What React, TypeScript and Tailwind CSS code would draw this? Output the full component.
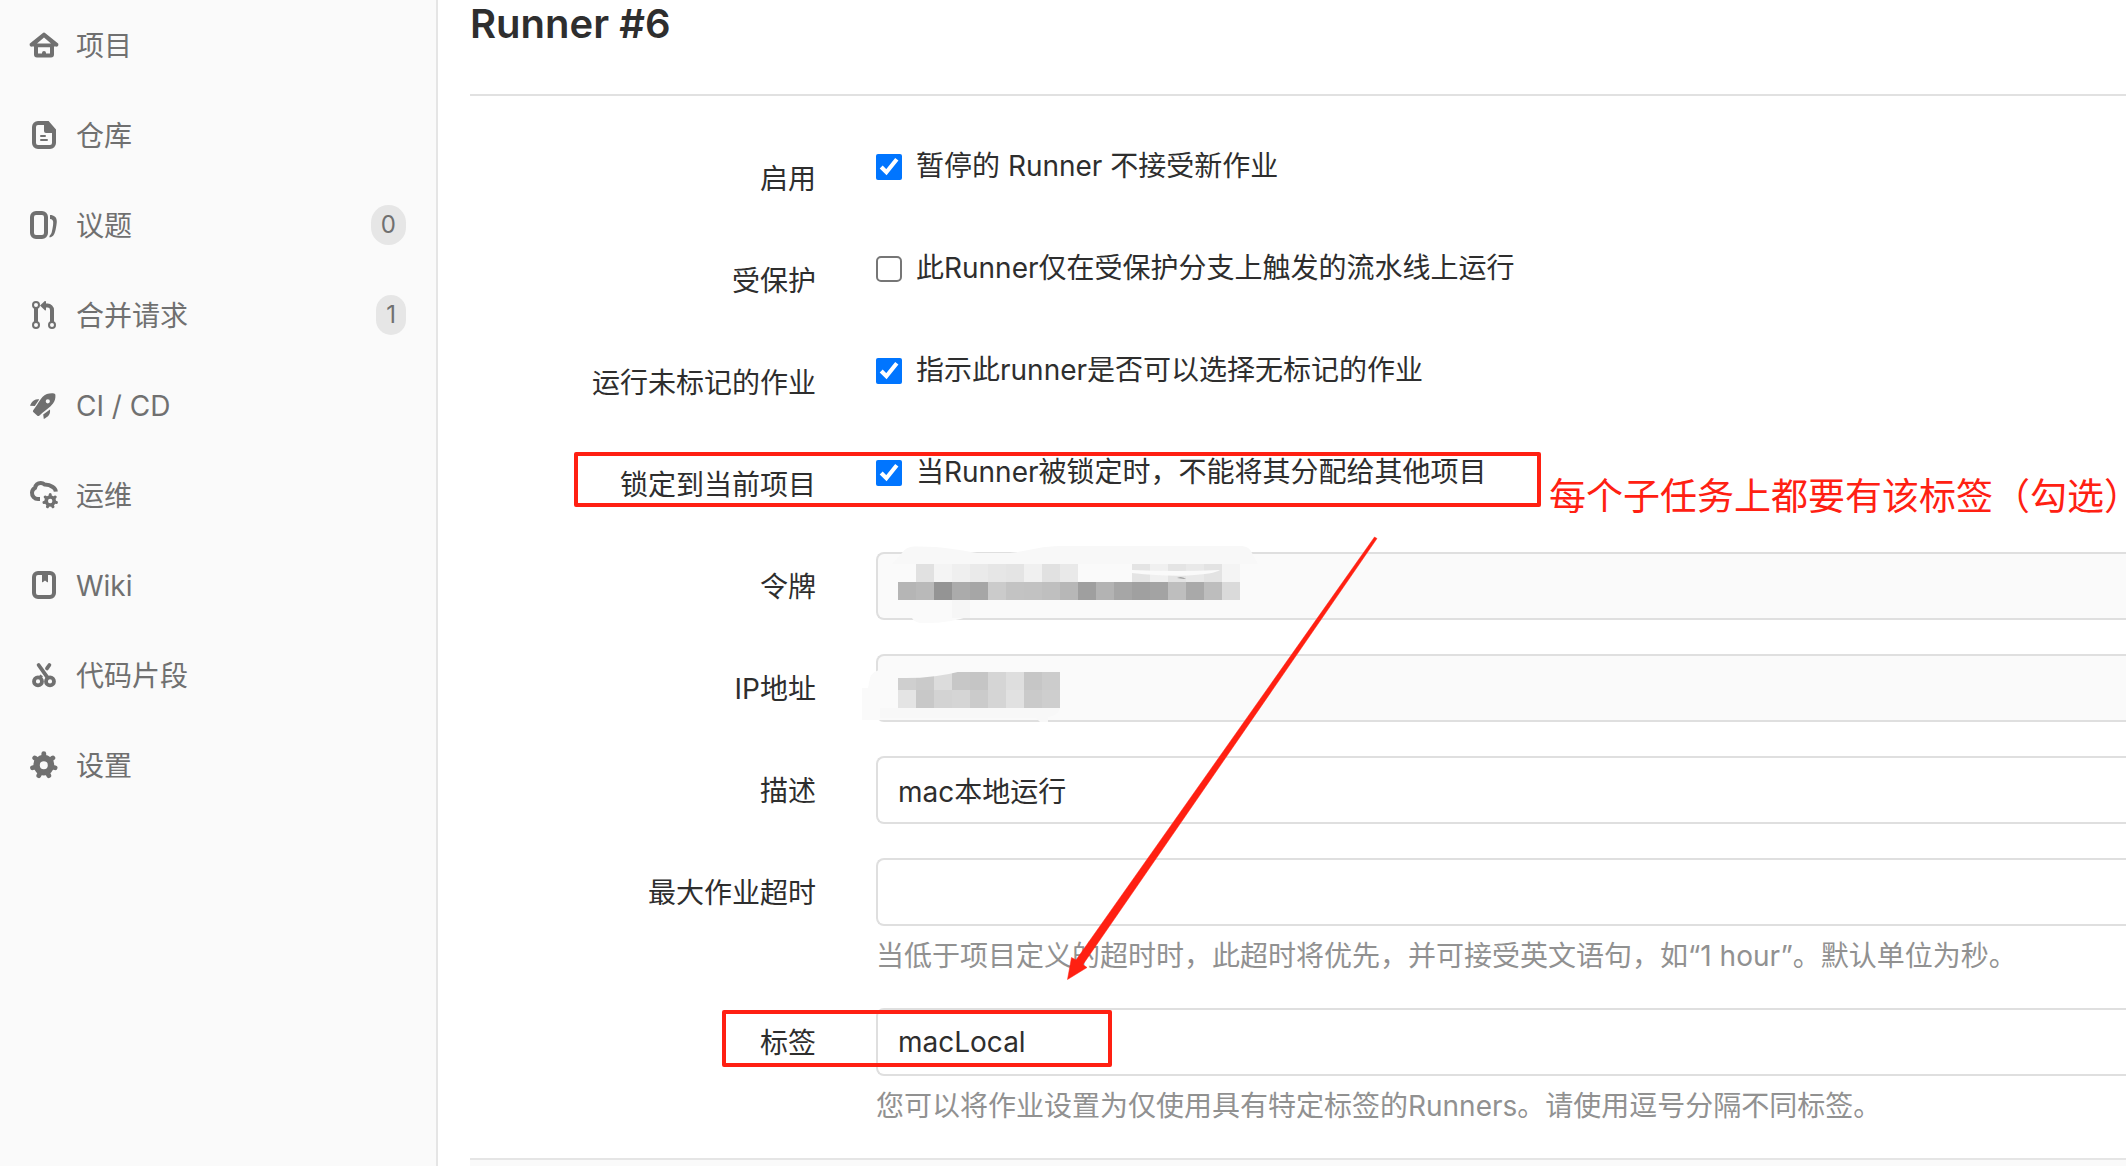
import React from "react";

type IconProps = { children: React.ReactNode };
const Icon = ({ children }: IconProps) => (
  <svg viewBox="0 0 16 16" className="size-8 shrink-0" fill="none" stroke="none" aria-hidden="true">
    {children}
  </svg>
);

const gearTeeth = (cx: number, cy: number, count: number, from: number, to: number) =>
  Array.from({ length: count }, (_, i) => {
    const a = -Math.PI / 2 + (i * 2 * Math.PI) / count;
    return `M${cx + from * Math.cos(a)} ${cy + from * Math.sin(a)}L${cx + to * Math.cos(a)} ${cy + to * Math.sin(a)}`;
  }).join("");

const HomeIcon = () => (
  <Icon>
    <path
      fill="currentColor"
      fillRule="evenodd"
      d="M7.3 2.1a1.1 1.1 0 0 1 1.4 0l5.9 4.8A1 1 0 0 1 14 8.8h-1v3.9a1.5 1.5 0 0 1-1.5 1.5h-7A1.5 1.5 0 0 1 3 12.700V8.800H2a1 1 0 0 1-.6-1.900zM8 4.200 4.500 7.200h7zM5 9.100v3.200h2V12a1 1 0 0 1 2 0v.3h2V9.100z"
    />
  </Icon>
);
const DocIcon = () => (
  <Icon>
    <path
      fill="currentColor"
      fillRule="evenodd"
      d="M5 1h5.300L14 5.200V12a3 3 0 0 1-3 3H5a3 3 0 0 1-3-3V4a3 3 0 0 1 3-3zm0 2a1 1 0 0 0-1 1v8a1 1 0 0 0 1 1h6a1 1 0 0 0 1-1V7H9a1 1 0 0 1-1-1V3z"
    />
    <path stroke="currentColor" strokeLinecap="round" d="M6.500 8.500h2M6.500 10.500h3" />
  </Icon>
);
const IssuesIcon = () => (
  <Icon>
    <rect x="2" y="2" width="7" height="12" rx="2" stroke="currentColor" strokeWidth="2" />
    <path
      fill="currentColor"
      d="M11 3c2 0 3.500 1 3.400 3.500-.2 2-.5 3.800-.9 5-.4 1.500-1.200 2.500-2.600 2.700-.3-.3-.2-.7 0-1 .7-.5.9-1.200 1.100-2.200.4-1.800.6-3 .6-4.500 0-.8-.5-1.400-1.600-1.500z"
    />
  </Icon>
);
const MergeIcon = () => (
  <Icon>
    <g stroke="currentColor">
      <circle cx="4" cy="3" r="1.500" />
      <circle cx="4" cy="13" r="1.500" />
      <circle cx="12" cy="13" r="1.500" />
      <path strokeWidth="2" d="M4 4.500v7M12 11.500V5.500a2.200 2.200 0 0 0-2.200-2.200H8.500" />
    </g>
    <path fill="currentColor" d="M6 3.200 8.400 1q.6-.2.6.4v3.800q0 .7-.6.4z" />
  </Icon>
);
const RocketIcon = () => (
  <Icon>
    <path
      fill="currentColor"
      fillRule="evenodd"
      d="M13 2.200q.7 0 .7.800c.1 1.600-.2 3-1.200 4.200-1.500 2-3.500 3-5.400 4.800l-1.500 1.400q-.5.300-.9 0l-2.100-1.900q-.3-.4 0-.9l1-1.400C5 7.500 5.800 5.500 7.200 4 8.800 2.400 10.800 2 13 2.200zM9.900 5.100a1 1 0 1 0 0 2.100 1 1 0 0 0 0-2.100z"
    />
    <path
      fill="currentColor"
      d="M1 8.400c.4-1.200 1-2.100 1.900-2.700.8-.5 1.700-.6 2.700-.5L3.400 8.500zM11 10.300c.1 1.200 0 2.100-.6 2.800-.7.800-1.500 1.400-2.500 1.900l-.3-2.300z"
    />
  </Icon>
);
const CloudGearIcon = () => (
  <Icon>
    <path
      stroke="currentColor"
      strokeWidth="2"
      d="M6 10H5a3 3 0 0 1-3-3.200A2.700 2.700 0 0 1 3.500 4.500C3.800 3 5 2 6.400 2c1 0 1.500.4 2 .8 1.800 0 3 .5 4 1.200.8.500 1.400 1.200 1.500 2.300"
    />
    <circle cx="11.100" cy="11" r="2" stroke="currentColor" strokeWidth="1.800" />
    <path stroke="currentColor" strokeWidth="1.500" strokeLinecap="round" d={gearTeeth(11.1, 11, 7, 2.4, 3.2)} />
  </Icon>
);
const WikiIcon = () => (
  <Icon>
    <rect x="3" y="2" width="10" height="12" rx="2" stroke="currentColor" strokeWidth="2" />
    <path fill="currentColor" d="M7 2.500h3v4q-.2.300-.5 0l-1-.8-1 .8q-.3.300-.5 0z" />
  </Icon>
);
const ScissorsIcon = () => (
  <Icon>
    <g stroke="currentColor" strokeWidth="1.900" strokeLinecap="round">
      <circle cx="5" cy="11.200" r="2" />
      <circle cx="11" cy="11.200" r="2" />
      <path d="M5.300 3l4.500 6.300M10.700 3 9.500 4.700" />
    </g>
    <path stroke="currentColor" strokeWidth="1.600" d="M6.800 8.200 6 9.300" />
  </Icon>
);
const GearIcon = () => (
  <Icon>
    <circle cx="7.900" cy="8.100" r="3.600" stroke="currentColor" strokeWidth="3.200" />
    <path stroke="currentColor" strokeWidth="2.400" strokeLinecap="round" d={gearTeeth(7.9, 8.1, 7, 4, 5.8)} />
  </Icon>
);

const NAV: { label: string; icon: () => React.ReactElement; count?: number }[] = [
  { label: "项目", icon: HomeIcon },
  { label: "仓库", icon: DocIcon },
  { label: "议题", icon: IssuesIcon, count: 0 },
  { label: "合并请求", icon: MergeIcon, count: 1 },
  { label: "CI / CD", icon: RocketIcon },
  { label: "运维", icon: CloudGearIcon },
  { label: "Wiki", icon: WikiIcon },
  { label: "代码片段", icon: ScissorsIcon },
  { label: "设置", icon: GearIcon },
];

const Row = ({ id, label, children }: { id: string; label: string; children: React.ReactNode }) => (
  <div className="grid grid-cols-[346px_1fr] gap-x-[60px]">
    <label htmlFor={id} className="flex h-[68px] items-center justify-end pt-[2px] whitespace-nowrap">
      {label}
    </label>
    <div className="relative min-w-0">{children}</div>
  </div>
);

const CheckRow = ({ id, label, text, checked }: { id: string; label: string; text: string; checked?: boolean }) => (
  <Row id={id} label={label}>
    <div className="flex items-start gap-[14px]">
      <input
        id={id}
        type="checkbox"
        defaultChecked={checked}
        className="mt-[10px] size-[26px] shrink-0 appearance-none rounded-[5px] border-2 border-[#767676] checked:appearance-auto"
      />
      <label htmlFor={id} className="pt-px whitespace-nowrap">
        {text}
      </label>
    </div>
  </Row>
);

const FIELD =
  "block h-[68px] w-full rounded-l-lg border-2 border-r-0 border-[#dfdfdf] px-5 outline-none";
const HINT = "-mb-[3px] pt-[9px] whitespace-nowrap text-[#919191]";

const TOKEN_TOP = [
  "", "#e1e1e1", "#f4f4f4", "#efefef", "#eaeaea", "#e6e6e6", "#e4e4e4", "#f0f0f0", "#e1e1e1", "#e9e9e9",
  "", "", "", "#e4e4e4", "#f0f0f0", "#e4e4e4", "#e9e9e9", "#e3e3e3", "#f4f4f4",
];
const TOKEN_BOTTOM = [
  "#b5b5b5", "#b9b9b9", "#949494", "#ababab", "#a6a6a6", "#cbcbcb", "#c3c3c3", "#c2c2c2", "#bfbfbf", "#b7b7b7",
  "#9f9f9f", "#b3b3b3", "#a6a6a6", "#a0a0a0", "#a3a3a3", "#bebebe", "#a9a9a9", "#bdbdbd", "#dadada",
];
const IP_TOP = ["#cfcfcf", "#cacaca", "#dcdcdc", "#c7c7c7", "#c5c5c5", "#d5d5d5", "#dedede", "#c6c6c6", "#cccccc"];
const IP_BOTTOM = ["#e4e4e4", "#c8c8c8", "#d3d3d3", "#d5d5d5", "#cbcbcb", "#d5d5d5", "#e1e1e1", "#cacaca", "#cecece"];

const Blocks = ({ y, colors }: { y: number; colors: string[] }) => (
  <>
    {colors.map((c, i) => (c ? <rect key={i} x={38 + i * 18} y={y} width="18" height="18" fill={c} /> : null))}
  </>
);

export default function App() {
  return (
    <div className="flex min-h-screen overflow-hidden bg-white font-[Inter,'Noto_Sans_CJK_SC',sans-serif] text-[28px] leading-[42px] text-[#2e2e2e]">
      <nav className="w-[438px] shrink-0 border-r-2 border-[#e5e5e5] bg-[#fafafa] text-[#707070]">
        <ul>
          {NAV.map(({ label, icon: Glyph, count }) => (
            <li key={label}>
              <a href="#" className="flex h-[90px] items-center gap-4 pr-[30px] pl-7">
                <Glyph />
                <span className="grow pt-[2px]">{label}</span>
                {count !== undefined && (
                  <span className="flex h-10 items-center rounded-full bg-[#e6e6e6] px-[10px] text-2xl">{count}</span>
                )}
              </a>
            </li>
          ))}
        </ul>
      </nav>

      <main className="min-w-0 grow pl-8">
        <h1 className="h-[94px] text-[40px] leading-[48px] font-semibold">Runner #6</h1>
        <hr className="border-t-2 border-[#e1e1e1]" />

        <form className="relative mt-12 flex flex-col gap-[34px]">
          <CheckRow id="active" label="启用" text="暂停的 Runner 不接受新作业" checked />
          <CheckRow id="protected" label="受保护" text="此Runner仅在受保护分支上触发的流水线上运行" />
          <CheckRow id="untagged" label="运行未标记的作业" text="指示此runner是否可以选择无标记的作业" checked />
          <CheckRow id="locked" label="锁定到当前项目" text="当Runner被锁定时，不能将其分配给其他项目" checked />

          <Row id="token" label="令牌">
            <input id="token" type="text" readOnly className={`${FIELD} bg-[#fafafa]`} />
            <svg className="pointer-events-none absolute -top-4 -left-4 h-[100px] w-[420px]" aria-hidden="true">
              <path fill="#f8f8f8" d="M32 28 42 17Q46 10.500 54 10.500C80 10 100 14 117 17h33c18-2 32-7 50-7h182q8 1 10 7l6 11z" />
              <path fill="#fafafa" d="M52 76h58v4q-22 8-50 7-6-1-8-5z" />
              <path fill="#f6f6f6" d="M92 64h18v18H92z" />
              <Blocks y={28} colors={TOKEN_TOP} />
              <Blocks y={46} colors={TOKEN_BOTTOM} />
              <path fill="#fafafa" d="M272 34q44 2 88 0-6 4-32 5.500-24 1-56-2.500z" />
              <path fill="#909090" d="M317 42q5-2 9 1z" />
            </svg>
          </Row>

          <Row id="ip" label="IP地址">
            <input id="ip" type="text" readOnly className={`${FIELD} bg-[#fafafa]`} />
            <svg className="pointer-events-none absolute -top-4 -left-4 h-[100px] w-[220px]" aria-hidden="true">
              <path fill="#fafafa" d="M2 82V50h6l2-10q3-8 12-8h18v50z" />
              <path fill="#f8f8f8" d="M20 70h180q-2 8-12 9v5h-8l-4-4H20z" />
              <Blocks y={34} colors={IP_TOP} />
              <Blocks y={52} colors={IP_BOTTOM} />
              <path fill="#fafafa" d="M38 33h64q-30 8-64 7z" />
            </svg>
          </Row>

          <Row id="description" label="描述">
            <input id="description" type="text" defaultValue="mac本地运行" className={FIELD} />
          </Row>

          <Row id="timeout" label="最大作业超时">
            <input id="timeout" type="text" className={FIELD} />
            <p className={HINT}>
              当低于项目定义的超时时，此超时将优先，并可接受英文语句，如“1 hour”。默认单位为秒。
            </p>
          </Row>

          <Row id="tags" label="标签">
            <input id="tags" type="text" defaultValue="macLocal" className={FIELD} />
            <p className={HINT}>
              您可以将作业设置为仅使用具有特定标签的Runners。请使用逗号分隔不同标签。
            </p>
          </Row>

          <div className="pointer-events-none absolute top-[308px] left-[104px] h-[55px] w-[967px] rounded-xs border-4 border-[#ff2012]" />
          <div className="pointer-events-none absolute top-[866px] left-[252px] h-[57px] w-[390px] rounded-xs border-4 border-[#ff2012]" />
          <p className="pointer-events-none absolute top-[327px] left-[1079px] text-[37px] leading-[52px] whitespace-nowrap text-[#ff2012]">
            每个子任务上都要有该标签（勾选<span className="[font-feature-settings:'halt']">）</span>
          </p>
          <svg className="pointer-events-none absolute top-[384px] left-[590px] h-[460px] w-[330px]" aria-hidden="true">
            <path
              fill="#ff2012"
              stroke="#ff2012"
              strokeWidth="0.500"
              strokeLinejoin="round"
              d="M314.500 9 317 10.500 23 436.500 27 439.500 7.500 451.500 11.500 429.500 16 432z"
            />
          </svg>
        </form>

        <footer className="mt-[34px] h-2 border-t-2 border-[#e5e5e5] bg-[#fafafa]" />
      </main>
    </div>
  );
}
